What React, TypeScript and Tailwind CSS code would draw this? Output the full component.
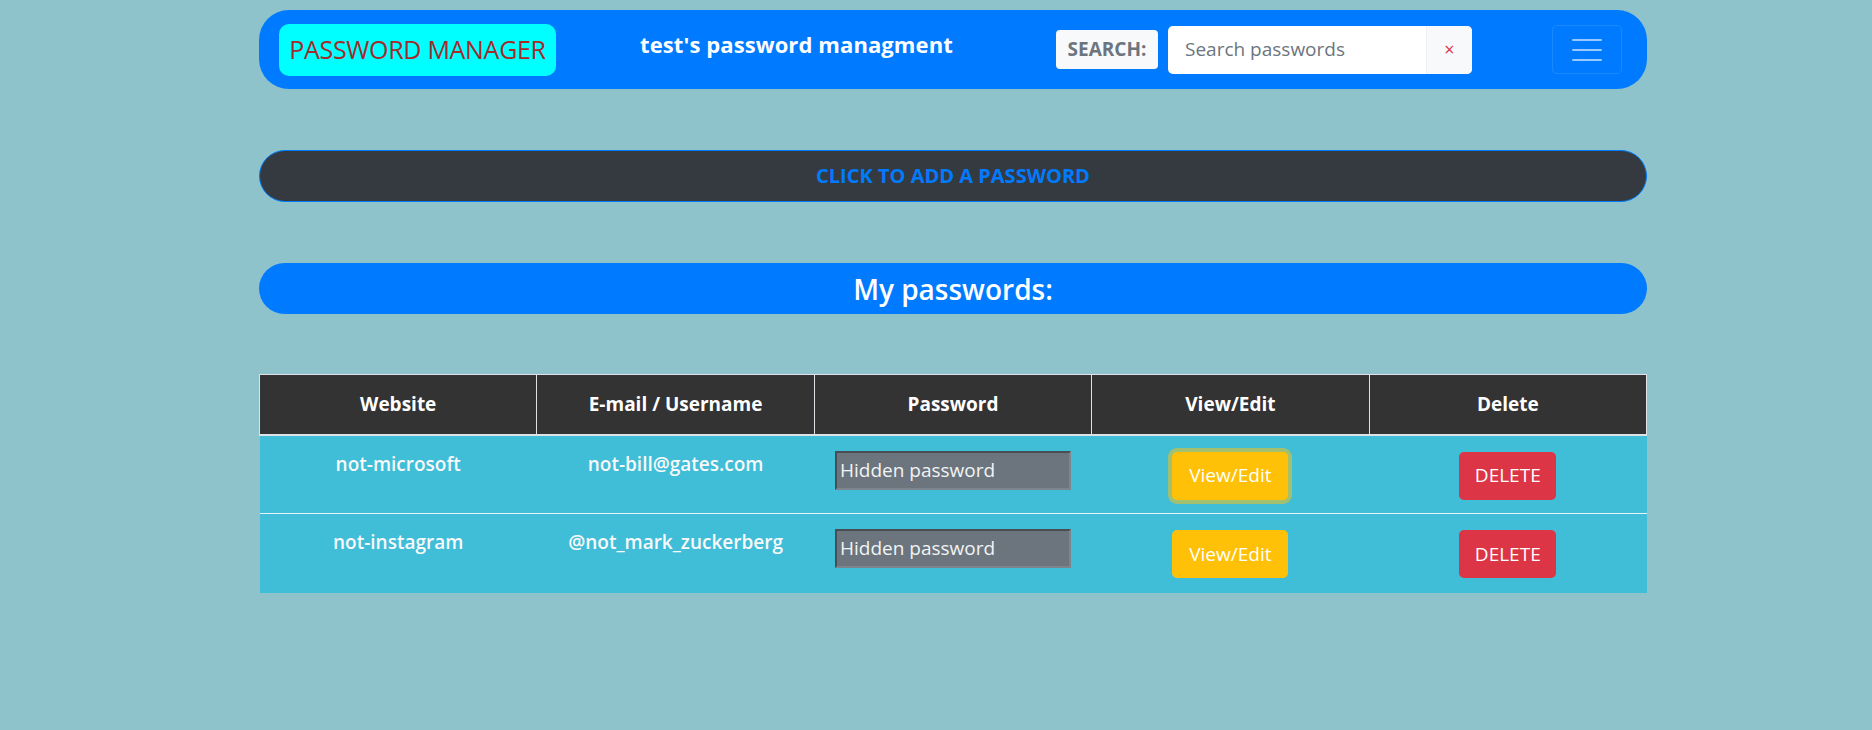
import React from "react";

const rows = [
  { site: "not-microsoft", user: "not-bill@gates.com", focus: true },
  { site: "not-instagram", user: "@not_mark_zuckerberg", focus: false },
];

export default function App() {
  return (
    <div
      className="min-h-[730px] w-full bg-[#8ec3cc] pt-[10px]"
      style={{ fontFamily: '"Open Sans", "Noto Sans", sans-serif' }}
    >
      <div className="ml-[259px] w-[1388px]">
        {/* Navbar */}
        <nav className="flex h-[79px] items-center rounded-[30px] bg-[#007bff] pl-[20px]">
          <div className="flex h-[52px] w-[277px] items-center justify-center rounded-[10px] bg-[#00ffff] text-[25px] tracking-[-0.3px] text-[#a52a2a]">
            PASSWORD MANAGER
          </div>
          <div className="ml-[84px] mb-[10px] w-[416px] text-[22px] font-bold tracking-[0.1px] text-white">
            test's password managment
          </div>
          <div className="flex items-center">
            <div className="flex h-[39px] w-[102px] items-center justify-center rounded-[4px] bg-[#f8f9fa] text-[19px] font-bold text-[#6c757d]">
              SEARCH:
            </div>
            <div className="ml-[10px] flex h-[48px] w-[304px] overflow-hidden rounded-[5px] bg-white">
              <div className="flex flex-1 items-center pl-[17px] text-[19px] text-[#6c757d]">
                Search passwords
              </div>
              <div className="flex w-[46px] items-center justify-center border-l border-[#eef0f2] bg-[#f8f9fa] text-[18px] text-[#dc3545]">
                ×
              </div>
            </div>
          </div>
          <div className="ml-[80px] flex h-[49px] w-[70px] flex-col items-center justify-center gap-[8px] rounded-[5px] border border-white/10">
            <span className="block h-[2px] w-[30px] rounded-full bg-white/60" />
            <span className="block h-[2px] w-[30px] rounded-full bg-white/60" />
            <span className="block h-[2px] w-[30px] rounded-full bg-white/60" />
          </div>
        </nav>

        {/* Add button */}
        <div className="mt-[61px] flex h-[52px] items-center justify-center rounded-full border border-[#007bff] bg-[#343a40] text-[20px] font-bold text-[#007bff]">
          CLICK TO ADD A PASSWORD
        </div>

        {/* My passwords */}
        <div className="mt-[61px] flex h-[51px] items-center justify-center rounded-[26px] bg-[#007bff] text-[28px] font-semibold text-white">
          My passwords:
        </div>

        {/* Table */}
        <table className="mt-[60px] w-full table-fixed border-collapse text-[19px]">
          <thead>
            <tr className="h-[60px] bg-[#333333]">
              {["Website", "E-mail / Username", "Password", "View/Edit", "Delete"].map((h) => (
                <th
                  key={h}
                  className="border border-[#dee2e6] border-b-[2px] text-center font-bold text-white"
                >
                  {h}
                </th>
              ))}
            </tr>
          </thead>
          <tbody>
            {rows.map((r, i) => (
              <tr
                key={r.site}
                className={`h-[79px] bg-[#40bdd7] ${i > 0 ? "border-t border-[#e6f4f7]" : ""}`}
              >
                <td className="pt-[14px] text-center align-top font-semibold text-[#f8f9fa]">
                  {r.site}
                </td>
                <td className="pt-[14px] text-center align-top font-semibold text-[#f8f9fa]">
                  {r.user}
                </td>
                <td className="pt-[15px] text-center align-top">
                  <div className="mx-auto flex h-[39px] w-[236px] items-center border-[2px] border-b-[#7d848b] border-l-[#494e53] border-r-[#7d848b] border-t-[#494e53] bg-[#6c757d] pl-[3px] text-left text-[19px] text-[#f1f3f5]">
                    Hidden password
                  </div>
                </td>
                <td className="pt-[16px] text-center align-top">
                  <button
                    className={`h-[48px] w-[116px] rounded-[5px] bg-[#ffc107] text-[19px] text-white ${
                      r.focus ? "ring-[4px] ring-[#a2c070]" : ""
                    }`}
                  >
                    View/Edit
                  </button>
                </td>
                <td className="pt-[16px] text-center align-top">
                  <button className="h-[48px] w-[97px] rounded-[5px] bg-[#dc3545] text-[19px] text-white">
                    DELETE
                  </button>
                </td>
              </tr>
            ))}
          </tbody>
        </table>
      </div>
    </div>
  );
}
